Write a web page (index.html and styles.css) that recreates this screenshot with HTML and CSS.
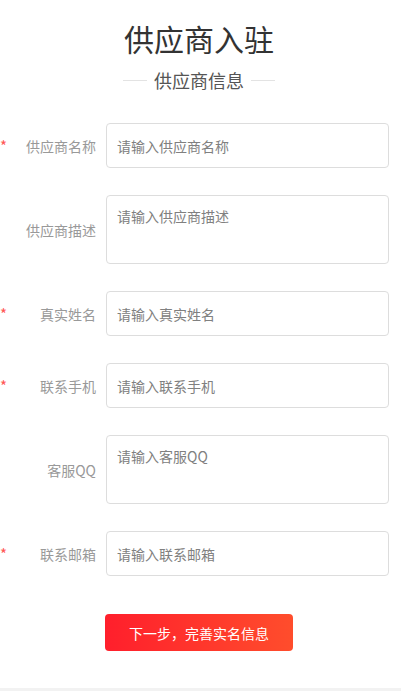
FILE: index.html
```html
<!DOCTYPE html>
<html lang="zh-CN">
<head>
  <meta charset="UTF-8">
  <meta name="viewport" content="width=device-width, initial-scale=1.0">
  <title>供应商入驻</title>
  <link rel="stylesheet" href="styles.css">
</head>
<body>
  <div class="page">
    <h1 class="page-title">供应商入驻</h1>
    <div class="section-title">
      <span class="line"></span>
      <span class="section-text">供应商信息</span>
      <span class="line"></span>
    </div>

    <!-- Form -->
    <form class="form">
      <div class="form-row">
        <label class="form-label"><span class="required">*</span>供应商名称</label>
        <input class="form-input" type="text" placeholder="请输入供应商名称">
      </div>
      <div class="form-row">
        <label class="form-label">供应商描述</label>
        <textarea class="form-input form-textarea" placeholder="请输入供应商描述"></textarea>
      </div>
      <div class="form-row">
        <label class="form-label"><span class="required">*</span>真实姓名</label>
        <input class="form-input" type="text" placeholder="请输入真实姓名">
      </div>
      <div class="form-row">
        <label class="form-label"><span class="required">*</span>联系手机</label>
        <input class="form-input" type="text" placeholder="请输入联系手机">
      </div>
      <div class="form-row">
        <label class="form-label">客服QQ</label>
        <textarea class="form-input form-textarea" placeholder="请输入客服QQ"></textarea>
      </div>
      <div class="form-row">
        <label class="form-label"><span class="required">*</span>联系邮箱</label>
        <input class="form-input" type="text" placeholder="请输入联系邮箱">
      </div>

      <div class="actions">
        <button type="button" class="btn-next">下一步，完善实名信息</button>
      </div>
    </form>
  </div>
  <div class="footer"></div>
</body>
</html>
```

FILE: styles.css
```css
/* Base Styles */
body {
  margin: 0;
  font-family: 'Noto Sans CJK SC', 'Noto Sans', sans-serif;
  background: #fff;
  color: #333;
}

.page {
  padding: 20px 3px 0 0;
  height: 668px;
}

.page-title {
  margin: 0;
  font-size: 30px;
  font-weight: normal;
  line-height: 36px;
  text-align: center;
  color: #333;
}

.section-title {
  display: flex;
  justify-content: center;
  align-items: center;
  margin-top: 11px;
  height: 26px;
}

.section-title .line {
  width: 24px;
  height: 1px;
  background: #e3e3e3;
}

.section-text {
  margin: 0 7px;
  font-size: 18px;
  color: #555;
}

.form {
  margin-top: 30px;
}

.form-row {
  display: flex;
  align-items: center;
  margin: 0 9px 27px 0;
}

.form-label {
  display: flex;
  justify-content: flex-end;
  align-items: center;
  width: 96px;
  padding-right: 10px;
  flex-shrink: 0;
  font-size: 14px;
  color: #999;
}

.required {
  margin-right: auto;
  color: #f55;
  font-size: 15px;
}

.form-input {
  flex: 1;
  box-sizing: border-box;
  height: 45px;
  padding: 0 10px;
  border: 1px solid #ddd;
  border-radius: 4px;
  font-family: inherit;
  font-size: 14px;
  color: #333;
  outline: none;
}

.form-input::placeholder {
  color: #808080;
}

.form-textarea {
  height: 69px;
  padding-top: 10px;
  resize: none;
  line-height: 20px;
}

.actions {
  display: flex;
  justify-content: center;
  margin-top: 38px;
}

.btn-next {
  width: 188px;
  height: 37px;
  border: none;
  border-radius: 4px;
  background: linear-gradient(90deg, #ff1f2c, #ff4d2c);
  color: #fff;
  font-family: inherit;
  font-size: 14px;
  cursor: pointer;
}

.footer {
  height: 30px;
  background: #f2f2f2;
}
```
